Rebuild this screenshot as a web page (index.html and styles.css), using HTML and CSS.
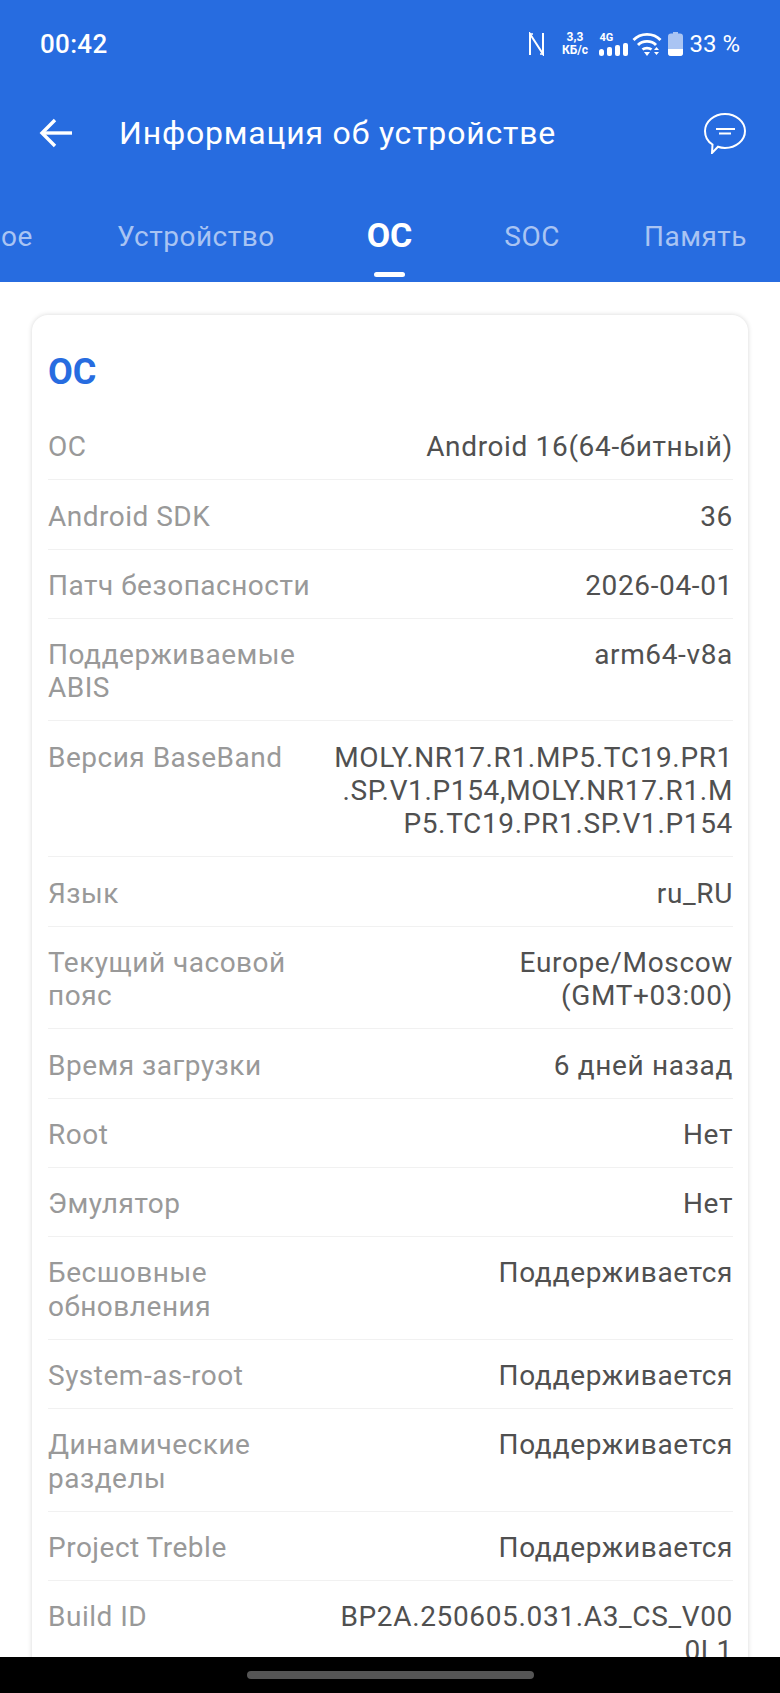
FILE: index.html
```html
<!DOCTYPE html>
<html lang="ru">
<head>
  <meta charset="UTF-8">
  <meta name="viewport" content="width=device-width, initial-scale=1.0">
  <title>Информация об устройстве</title>
  <link rel="stylesheet" href="styles.css">
</head>
<body>
  <header class="top">
    <div class="status">
      <span class="time">00:42</span>
      <div class="status-icons">
        <svg width="17" height="24" viewBox="0 0 17 24" fill="none" stroke="#fff" stroke-width="2"><path d="M2 23V2L15 22V1"/><path d="M1 2h4M12 22h4" stroke-width="1.500"/></svg>
        <span class="speed"><span>3,3</span><span>КБ/с</span></span>
        <span class="net">
          <span class="net-label">4G</span>
          <svg width="29" height="13" viewBox="0 0 29 13" fill="#fff"><rect x="0" y="6" width="5" height="7" rx="2.500"/><rect x="8" y="4" width="5" height="9" rx="2"/><rect x="16" y="2" width="5" height="11" rx="2"/><rect x="24" y="0" width="5" height="13" rx="2"/></svg>
        </span>
        <svg class="ic-wifi" width="30" height="24" viewBox="0 0 30 24" fill="none" stroke="#fff" stroke-width="2.800"><path d="M1.500 8C8.500 .5 21.500 .5 28.500 8"/><path d="M6 13C10.500 8.200 19.500 8.200 24 13"/><path d="M10.500 17.500C12.800 15.600 17.200 15.600 19.500 17.500"/><path d="M12 20h6l-3 4z" fill="#fff" stroke="none"/><path d="M22 18l2.500-3 2.500 3zM22 20l2.500 3 2.500-3z" fill="#fff" stroke="none"/></svg>
        <svg class="ic-battery" width="15" height="24" viewBox="0 0 15 24"><path d="M5 0h5v2H5z" fill="#a9c4f3"/><rect x="0" y="1.500" width="15" height="22.500" rx="3" fill="#a9c4f3"/><path d="M0 17h15v4a3 3 0 0 1-3 3H3a3 3 0 0 1-3-3z" fill="#fff"/></svg>
        <span class="percent">33 %</span>
      </div>
    </div>
    <div class="toolbar">
      <svg class="ic-back" width="34" height="30" viewBox="0 0 34 30" fill="none" stroke="#fff" stroke-width="3.400"><path d="M33 15H3"/><path d="M16 2L3 15l13 13"/></svg>
      <h1 class="title">Информация об устройстве</h1>
      <svg class="ic-chat" width="42" height="41" viewBox="0 0 42 41" fill="none" stroke="#fff" stroke-width="2"><path d="M21 1c11 0 20 7.500 20 17s-9 17-20 17c-2.500 0-5-.400-7-1.200L8 40l.500-8.500C3.500 28.500 1 23.500 1 18 1 8.500 10 1 21 1z"/><path d="M12 16h19M15 20.500h12"/></svg>
    </div>
    <nav class="tabs">
      <span class="tab">Основное</span>
      <span class="tab">Устройство</span>
      <span class="tab active">ОС</span>
      <span class="tab">SOC</span>
      <span class="tab">Память</span>
    </nav>
  </header>

  <main class="content">
    <section class="card">
      <h2 class="card-title">ОС</h2>
      <div class="row"><span class="key">ОС</span><span class="val">Android 16(64-битный)</span></div>
      <div class="row"><span class="key">Android SDK</span><span class="val">36</span></div>
      <div class="row"><span class="key">Патч безопасности</span><span class="val">2026-04-01</span></div>
      <div class="row"><span class="key">Поддерживаемые ABIS</span><span class="val">arm64-v8a</span></div>
      <div class="row"><span class="key">Версия BaseBand</span><span class="val">MOLY.NR17.R1.MP5.TC19.PR1<br>.SP.V1.P154,MOLY.NR17.R1.M<br>P5.TC19.PR1.SP.V1.P154</span></div>
      <div class="row"><span class="key">Язык</span><span class="val">ru_RU</span></div>
      <div class="row"><span class="key">Текущий часовой пояс</span><span class="val">Europe/Moscow<br>(GMT+03:00)</span></div>
      <div class="row"><span class="key">Время загрузки</span><span class="val">6 дней назад</span></div>
      <div class="row"><span class="key">Root</span><span class="val">Нет</span></div>
      <div class="row"><span class="key">Эмулятор</span><span class="val">Нет</span></div>
      <div class="row"><span class="key">Бесшовные обновления</span><span class="val">Поддерживается</span></div>
      <div class="row"><span class="key">System-as-root</span><span class="val">Поддерживается</span></div>
      <div class="row"><span class="key">Динамические разделы</span><span class="val">Поддерживается</span></div>
      <div class="row"><span class="key">Project Treble</span><span class="val">Поддерживается</span></div>
      <div class="row"><span class="key">Build ID</span><span class="val">BP2A.250605.031.A3_CS_V00<br>0L1</span></div>
    </section>
  </main>

  <footer class="navbar"><span class="pill"></span></footer>
</body>
</html>
```

FILE: styles.css
```css
* { box-sizing: border-box; }
html, body { margin: 0; height: 100%; }
body { width: 780px; height: 1693px; overflow: hidden; display: flex; flex-direction: column; background: #fff; font-family: Roboto, sans-serif; }

.top { flex: none; height: 282px; background: #276ce0; color: #fff; display: flex; flex-direction: column; }

.status { height: 88px; padding: 0 40px; display: flex; align-items: center; justify-content: space-between; }
.time { font-size: 26px; font-weight: 500; letter-spacing: .3px; }
.status-icons { display: flex; align-items: center; }
.speed { display: flex; flex-direction: column; align-items: center; width: 25px; margin-left: 17px; font-size: 12px; font-weight: 700; line-height: 13px; white-space: nowrap; }
.net { display: flex; flex-direction: column; justify-content: flex-end; width: 29px; height: 24px; margin-left: 12px; }
.net-label { font-size: 11px; font-weight: 700; line-height: 11px; }
.ic-wifi { margin-left: 4px; }
.ic-battery { margin-left: 6px; }
.percent { font-size: 24px; margin-left: 6px; }

.toolbar { height: 86px; margin-top: 2px; padding: 0 34px 0 39px; display: flex; align-items: center; }
.title { margin: 0 0 0 46px; flex: 1; font-size: 32px; font-weight: 400; letter-spacing: .8px; }

.tabs { flex: 1; display: flex; justify-content: flex-end; overflow: hidden; padding-right: 33px; gap: 84px; font-size: 28px; margin-top: -2px; }
.tab { flex: none; position: relative; height: 100%; padding-top: 46px; color: #a9c4f3; letter-spacing: .5px; }
.tab.active { color: #fff; font-size: 34px; font-weight: 700; padding-top: 41px; margin: 0 8px; letter-spacing: 0; }
.tab.active::after { content: ""; position: absolute; left: 7px; right: 7px; bottom: 5px; height: 5px; border-radius: 2.500px; background: #fff; }

.content { flex: 1; min-height: 0; overflow: hidden; padding: 33px 32px 0; }
.card { background: #fff; border-radius: 16px; padding: 16px 15px 0 16px; box-shadow: 0 0 5px rgba(0, 0, 0, .16); }
.card-title { margin: 0; height: 80px; font-size: 36px; font-weight: 700; line-height: 83px; color: #276ce0; }

.row { display: flex; justify-content: space-between; padding: 19.250px 0 15.600px; font-size: 28px; line-height: 33.400px; letter-spacing: .5px; border-bottom: 1px solid #f1f1f1; }
.row:last-child { border-bottom: 0; }
.key { flex: 1; min-width: 0; padding-right: 16px; color: #999; }
.val { flex: none; width: 402px; text-align: right; color: #505050; letter-spacing: .65px; }

.navbar { flex: none; height: 36px; background: #000; display: flex; justify-content: center; padding-top: 14px; }
.pill { width: 287px; height: 8px; border-radius: 4px; background: #555; }
```
